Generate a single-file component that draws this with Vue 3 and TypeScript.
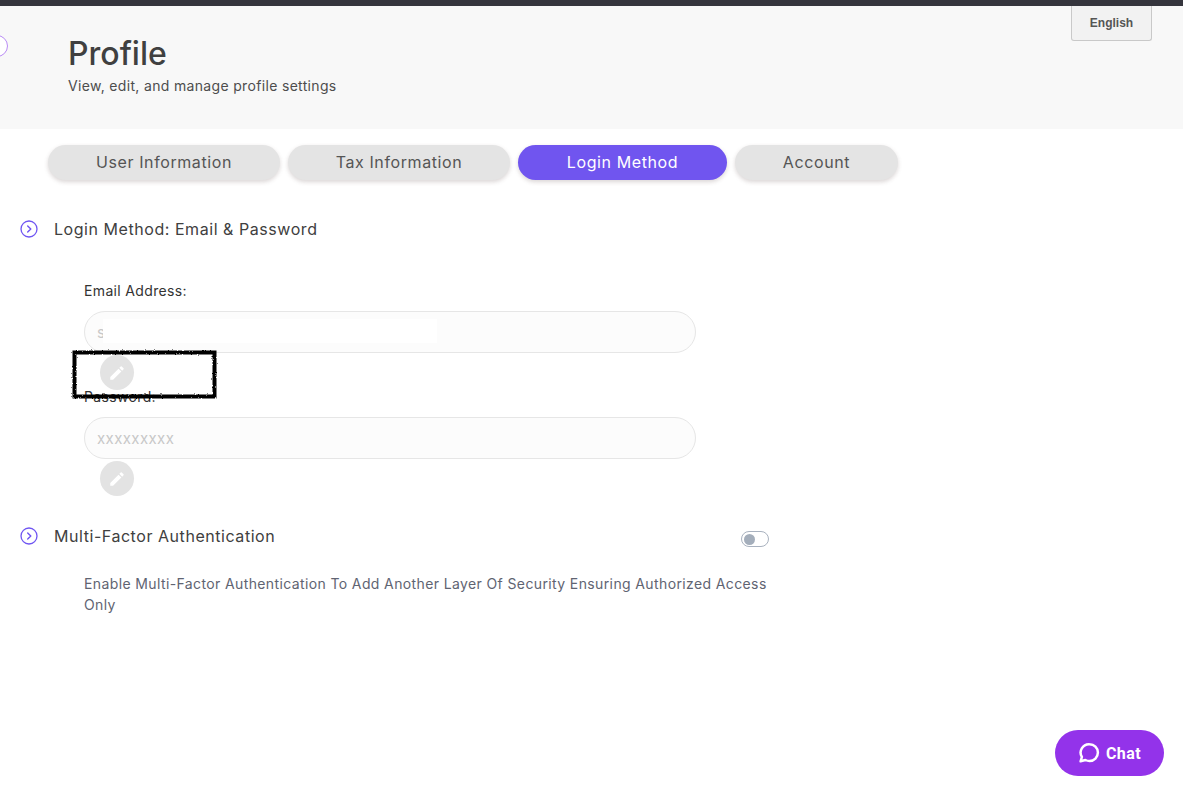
<script setup lang="ts">
const tabs = [
  { label: 'User Information', active: false },
  { label: 'Tax Information', active: false },
  { label: 'Login Method', active: true },
  { label: 'Account', active: false },
]
</script>

<template>
  <div class="page">
    <div class="topbar"></div>
    <header class="header">
      <span class="nav-circle"></span>
      <h1 class="title">Profile</h1>
      <p class="subtitle">View, edit, and manage profile settings</p>
      <button class="lang">English</button>
    </header>

    <nav class="tabs">
      <button v-for="t in tabs" :key="t.label" class="tab" :class="{ active: t.active }">{{ t.label }}</button>
    </nav>

    <section class="login">
      <div class="section-head">
        <svg class="chev" viewBox="0 0 18 18" width="18" height="18" fill="none">
          <circle cx="9" cy="9" r="8" stroke="#6f55f2" stroke-width="1.3" />
          <path d="M7.7 5.9 10.8 9l-3.1 3.1" stroke="#6f55f2" stroke-width="1.4" stroke-linecap="round" stroke-linejoin="round" />
        </svg>
        <h2 class="section-title">Login Method: Email &amp; Password</h2>
      </div>

      <div class="fields">
        <label class="label">Email Address:</label>
        <div class="input"><span class="value">s</span><span class="redact"></span></div>
        <button class="edit" aria-label="Edit email">
          <svg viewBox="0 0 24 24" width="18" height="18" fill="#fff">
            <path d="M3 17.25V21h3.75L17.81 9.94l-3.75-3.75L3 17.25zM20.71 7.04a1 1 0 0 0 0-1.41l-2.34-2.34a1 1 0 0 0-1.41 0l-1.83 1.83 3.75 3.75 1.83-1.83z" />
          </svg>
        </button>
        <label class="label second">Password:</label>
        <div class="input"><span class="value">xxxxxxxxx</span></div>
        <button class="edit" aria-label="Edit password">
          <svg viewBox="0 0 24 24" width="18" height="18" fill="#fff">
            <path d="M3 17.25V21h3.75L17.81 9.94l-3.75-3.75L3 17.25zM20.71 7.04a1 1 0 0 0 0-1.41l-2.34-2.34a1 1 0 0 0-1.41 0l-1.83 1.83 3.75 3.75 1.83-1.83z" />
          </svg>
        </button>
        <svg class="scribble" viewBox="0 0 147 50" width="147" height="50" fill="none">
          <defs>
            <filter id="rough" x="-5%" y="-10%" width="110%" height="120%">
              <feTurbulence type="fractalNoise" baseFrequency="0.7" numOctaves="2" seed="3" />
              <feDisplacementMap in="SourceGraphic" scale="2.5" />
            </filter>
          </defs>
          <rect x="3.5" y="3.5" width="140" height="44" stroke="#000" stroke-width="4" filter="url(#rough)" />
        </svg>
      </div>
    </section>

    <section class="mfa">
      <div class="mfa-head">
        <div class="section-head">
          <svg class="chev" viewBox="0 0 18 18" width="18" height="18" fill="none">
            <circle cx="9" cy="9" r="8" stroke="#6f55f2" stroke-width="1.3" />
            <path d="M7.7 5.9 10.8 9l-3.1 3.1" stroke="#6f55f2" stroke-width="1.4" stroke-linecap="round" stroke-linejoin="round" />
          </svg>
          <h2 class="section-title">Multi-Factor Authentication</h2>
        </div>
        <span class="toggle"><span class="knob"></span></span>
      </div>
      <p class="mfa-text">Enable Multi-Factor Authentication To Add Another Layer Of Security Ensuring Authorized Access Only</p>
    </section>

    <button class="chat">
      <svg viewBox="0 0 22 22" width="22" height="22" fill="none" stroke="#fff" stroke-width="2.5" stroke-linejoin="round">
        <path d="M11.5 2.2a8.4 8.4 0 0 1 0 16.8c-1.5 0-2.9-.4-4.1-1L2.6 19.3l1.3-4.3a8.4 8.4 0 0 1 7.6-12.8z" />
      </svg>
      <span>Chat</span>
    </button>
  </div>
</template>

<style>
html, body { margin: 0; background: #fff; }
</style>

<style scoped>
.page {
  position: relative;
  min-height: 790px;
  overflow: hidden;
  background: #fff;
  font-family: Inter, "Open Sans", sans-serif;
  color: #404040;
}
.topbar { height: 6px; background: #35353d; }
.header {
  position: relative;
  box-sizing: border-box;
  height: 123px;
  padding: 30px 0 0 68px;
  background: #f8f8f8;
}
.nav-circle {
  position: absolute;
  left: -14px;
  top: 29px;
  width: 20px;
  height: 20px;
  border: 1px solid #b98bf5;
  border-radius: 50%;
  background: #fff;
}
.title {
  margin: 0;
  font-size: 32px;
  line-height: 36px;
  font-weight: 500;
  color: #404040;
}
.subtitle {
  margin: 4px 0 0;
  font-size: 14px;
  line-height: 20px;
  letter-spacing: 0.33px;
  color: #4d4d4d;
}
.lang {
  position: absolute;
  right: 31px;
  top: 0;
  width: 81px;
  height: 35px;
  padding: 0;
  background: #f2f2f2;
  border: 1px solid #c9c9c9;
  border-top: 0;
  border-radius: 0 0 3px 3px;
  font: bold 12px "Liberation Sans", sans-serif;
  color: #555;
}
.tabs {
  display: grid;
  grid-template-columns: 232px 222px 209px 163px;
  gap: 8px;
  margin: 16px 0 0 48px;
}
.tab {
  height: 35px;
  padding: 0 0 2px;
  border: 0;
  border-radius: 18px;
  background: #e4e4e4;
  box-shadow: 0 2px 4px rgba(90, 70, 70, 0.22);
  font-family: inherit;
  font-size: 16px;
  letter-spacing: 0.6px;
  color: #555;
}
.tab.active { background: #7055ef; color: #fff; }
.login { margin: 36px 0 0 20px; }
.section-head { display: flex; align-items: center; gap: 16px; height: 26px; }
.section-title {
  margin: 0;
  font-size: 16px;
  line-height: 26px;
  font-weight: 400;
  letter-spacing: 0.55px;
  color: #404040;
}
.fields { position: relative; margin: 39px 0 0 64px; width: 612px; }
.label { display: block; font-size: 14px; line-height: 20px; letter-spacing: 0.35px; color: #333; }
.label.second { margin-top: -3px; }
.input {
  position: relative;
  box-sizing: border-box;
  height: 42px;
  margin-top: 10px;
  padding-left: 12px;
  display: flex;
  align-items: center;
  border: 1px solid #e6e6e6;
  border-radius: 21px;
  background: #fcfcfc;
}
.value { font-size: 15px; letter-spacing: 0.4px; color: #c8c8c8; }
.redact {
  position: absolute;
  left: 18px;
  top: 7px;
  width: 334px;
  height: 24px;
  background: #fff;
}
.edit {
  display: flex;
  align-items: center;
  justify-content: center;
  width: 34px;
  height: 35px;
  margin: 2px 0 0 16px;
  padding: 0;
  border: 0;
  border-radius: 50%;
  background: #e3e3e3;
}
.scribble {
  position: absolute;
  left: -13px;
  top: 68px;
}
.mfa { margin: 27px 0 0 20px; width: 749px; }
.mfa-head { display: flex; justify-content: space-between; align-items: flex-start; }
.toggle {
  box-sizing: border-box;
  display: flex;
  align-items: center;
  width: 28px;
  height: 16px;
  margin-top: 8px;
  padding-left: 2px;
  border: 1px solid #a9b2bf;
  border-radius: 8px;
  background: #fff;
}
.knob { width: 11px; height: 11px; border-radius: 50%; background: #a4aebb; }
.mfa-text {
  margin: 24px 0 0 64px;
  font-size: 14px;
  line-height: 21px;
  letter-spacing: 0.38px;
  color: #5f6472;
}
.chat {
  position: fixed;
  right: 19px;
  bottom: 14px;
  display: flex;
  align-items: center;
  justify-content: center;
  gap: 6px;
  width: 109px;
  height: 46px;
  padding: 0;
  border: 0;
  border-radius: 23px;
  background: #9333ea;
  color: #fff;
  font: 700 16px Roboto, sans-serif;
  letter-spacing: 0.4px;
}
</style>
